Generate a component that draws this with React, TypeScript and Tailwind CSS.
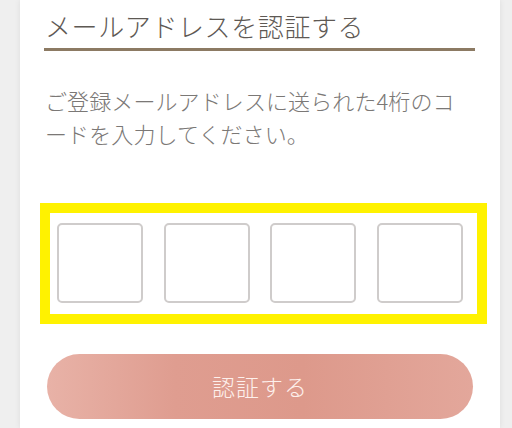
import React from 'react'

const digits = [0, 1, 2, 3]

export default function App() {
  return (
    <div
      className="w-[512px] h-[428px] overflow-hidden bg-[#efefef] flex"
      style={{ fontFamily: '"Noto Sans CJK JP", "Noto Sans", sans-serif' }}
    >
      {/* Card */}
      <div className="ml-[20px] w-[480px] h-full bg-white shadow-[0_0_6px_rgba(0,0,0,0.08)]">
        {/* Heading */}
        <div className="ml-[24px] mr-[25px] pt-[9px]">
          <h1 className="text-[26px] leading-[34px] font-light text-[#5e5954] tracking-[0.6px] pl-[1px]">
            メールアドレスを認証する
          </h1>
          <div className="mt-[5px] h-[3px] bg-[#8c7a63]" />
        </div>

        {/* Description */}
        <p className="ml-[24px] mr-[25px] mt-[33px] text-[22px] leading-[33px] font-light text-[#7b7876] tracking-[0.1px] pl-[1px]">
          ご登録メールアドレスに送られた4桁のコ
          <br />
          ードを入力してください。
        </p>

        {/* Code inputs */}
        <div className="ml-[20px] mt-[53px] w-[447px] border-[10px] border-[#fff200] pt-[10px] pb-[11px] pl-[7px] flex gap-[20.5px]">
          {digits.map((d) => (
            <div
              key={d}
              className="w-[86px] h-[80px] rounded-[5px] border-2 border-[#cfcccb] bg-white"
            />
          ))}
        </div>

        {/* Submit */}
        <div className="ml-[27px] mt-[30px] w-[426px] h-[65px] rounded-full bg-[linear-gradient(90deg,#e8b2a7_0%,#df9d90_30%,#dd998b_60%,#e3a79b_100%)] flex items-center justify-center">
          <span className="text-[23px] font-light text-[#fdf0ec] tracking-[1px]">認証する</span>
        </div>
      </div>
    </div>
  )
}
